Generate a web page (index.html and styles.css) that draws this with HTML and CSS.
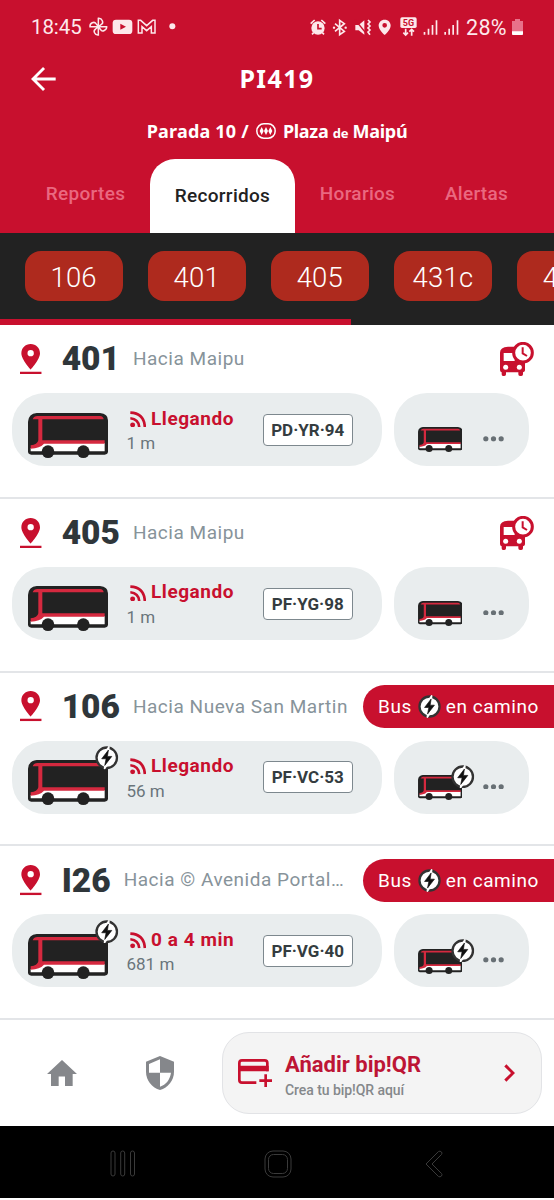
FILE: index.html
```
<!DOCTYPE html>
<html lang="es">
<head>
<meta charset="utf-8">
<title>PI419</title>
<link rel="stylesheet" href="styles.css">
</head>
<body>
<svg class="defs" aria-hidden="true">
  <symbol id="pin" viewBox="0 0 65 91">
    <path fill-rule="evenodd" d="M32 0C16 0 4 12 4 28C4 47 32 77 32 77S60 47 60 28C60 12 48 0 32 0ZM32 18A9.500 9.500 0 1 1 32 37A9.500 9.500 0 1 1 32 18ZM0 83H65V91H0Z" fill="#c8102e"/>
  </symbol>
  <symbol id="bus" viewBox="0 0 240 135">
    <path d="M26 0H216Q240 2 240 22V115Q240 125 230 125H10Q0 125 0 115V26Q2 2 26 0Z" fill="#222"/>
    <path d="M8 105Q32 104 44 90H230V115H8Z" fill="#fff"/>
    <path d="M14 19Q18 9 28 9H216Q226 10 227 19H43V82H230V92H48Q36 106 8 107V97Q28 96 31 82V19Z" fill="#d5293f"/>
    <circle cx="60" cy="116" r="19" fill="#222"/><circle cx="166" cy="116" r="19" fill="#222"/>
  </symbol>
  <symbol id="bolt" viewBox="0 0 70 70">
    <circle cx="35" cy="35" r="30.500" fill="#fff" stroke="#333" stroke-width="7"/>
    <path d="M42 1L17 40H31L28 69L54 29H39Z" fill="#fff" stroke="#fff" stroke-width="4"/>
    <path d="M40 12L20 38H33L29 58L50 31H37Z" fill="#111" stroke="#111" stroke-width="2"/>
  </symbol>
  <symbol id="rss" viewBox="0 0 50 50">
    <circle cx="8" cy="42" r="7.500" fill="#c8102e"/>
    <path d="M1 22Q26 24 28 49M1 5Q43 7 45 49" fill="none" stroke="#c8102e" stroke-width="8"/>
  </symbol>
  <symbol id="schedule" viewBox="0 0 102 102">
    <path d="M0 32Q0 15 24 14H58L75 45V85Q75 90 69 91V97Q69 102 64 102H60Q55 102 55 97V91H18V97Q18 102 13 102H9Q5 102 5 97V91Q0 90 0 84Z" fill="#c8102e"/>
    <path d="M11 33H44V57H11Z" fill="#fff"/>
    <circle cx="17" cy="76" r="7.500" fill="#fff"/><circle cx="58" cy="76" r="7.500" fill="#fff"/>
    <circle cx="69" cy="32" r="28" fill="#fff" stroke="#c8102e" stroke-width="9"/>
    <path d="M68 16V34L81 42" fill="none" stroke="#c8102e" stroke-width="6"/>
  </symbol>
  <symbol id="dots" viewBox="0 0 63 17">
    <circle cx="8.500" cy="8.500" r="7.800"/><circle cx="31.500" cy="8.500" r="7.800"/><circle cx="54.500" cy="8.500" r="7.800"/>
  </symbol>
</svg>

<header class="header">
  <div class="status">
    <span class="clock">18:45</span>
    <svg class="notifs" viewBox="0 0 270 66">
      <g fill="none" stroke="#fde8eb" stroke-width="4.500">
        <path d="M31 32V7C43 6 48 21 40 25L31 32H56C57 43 42 49 38 41L31 32V57C20 58 14 44 23 39L31 32H6C5 21 19 15 24 23Z"/>
        <path d="M151 51V13H158L176 29L194 13H201V51H190V32L176 44L162 32V51Z"/>
      </g>
      <rect x="74" y="11" width="59" height="43" rx="10" fill="#fde8eb"/>
      <path d="M97 23L114 32L97 41Z" fill="#c8102e"/>
      <circle cx="253" cy="31" r="9" fill="#fde8eb"/>
    </svg>
    <svg class="system" viewBox="0 0 450 62">
      <g fill="#fde8eb">
        <circle cx="24" cy="33" r="20"/>
        <path d="M2 20L14 9M34 9L46 20M11 47L6 52M37 47L42 52" stroke="#fde8eb" stroke-width="5"/>
        <path d="M136 24H146L163 10V53L146 40H136Z"/>
        <path fill-rule="evenodd" d="M224 8C213 8 206 16 206 26C206 38 224 54 224 54S242 38 242 26C242 16 235 8 224 8ZM224 18A7 7 0 1 1 224 32A7 7 0 1 1 224 18Z"/>
        <rect x="271" y="1" width="49" height="32" rx="5"/>
        <path d="M341 45h5v8h-5zM353 35h5v18h-5zM365 24h5v29h-5zM377 10h5v43h-5zM403 45h5v8h-5zM415 35h5v18h-5zM427 24h5v29h-5zM440 10h5v43h-5z"/>
      </g>
      <path d="M24 21V35H35" fill="none" stroke="#c8102e" stroke-width="5"/>
      <g fill="none" stroke="#fde8eb" stroke-width="5">
        <path d="M75 20L103 43L89 53V10L103 20L75 43"/>
        <path d="M174 9L180 15L174 21L180 27L174 33L180 39L174 45L180 53"/>
        <path d="M287 35V53M280 47L287 54L294 47M305 56V38M298 44L305 37L312 44"/>
      </g>
      <path d="M135 8L170 51" stroke="#c8102e" stroke-width="4"/>
      <g fill="#fde8eb"><circle cx="72" cy="32" r="3.500"/><circle cx="107" cy="32" r="3.500"/></g>
      <text class="net" x="295.500" y="27" text-anchor="middle">5G</text>
    </svg>
    <span class="percent">28%</span>
    <svg class="battery" viewBox="0 0 33 48">
      <path d="M9 0H24V6H33V48H0V6H9Z" fill="#e8718a"/><path d="M0 37H33V44Q33 48 29 48H4Q0 48 0 44Z" fill="#fff"/>
    </svg>
  </div>
  <div class="titlebar">
    <svg class="back" viewBox="0 0 74 72"><path d="M74 36H6M39 3L6 36L39 69" fill="none" stroke="#fff" stroke-width="8.500"/></svg>
    <h1 class="title">PI419</h1>
  </div>
  <p class="stop">
    <span class="stop-code">Parada 10 /</span>
    <svg class="metro" viewBox="0 0 60 48">
      <rect x="2.500" y="2.500" width="55" height="43" rx="21" fill="none" stroke="#fff" stroke-width="4.500"/>
      <path d="M17 12L23 24L17 36L11 24ZM30 12L36 24L30 36L24 24ZM43 12L49 24L43 36L37 24Z" fill="#fff"/>
    </svg>
    <span class="stop-name">Plaza <small class="de">de</small> Maipú</span>
  </p>
  <nav class="tabs">
    <span class="tab">Reportes</span>
    <span class="tab active">Recorridos</span>
    <span class="tab hours">Horarios</span>
    <span class="tab alerts">Alertas</span>
  </nav>
</header>

<section class="routes">
  <div class="pills">
    <span class="pill">106</span><span class="pill">401</span><span class="pill">405</span><span class="pill">431c</span><span class="pill">435</span>
  </div>
  <div class="scroll"></div>
</section>

<main>
  <article class="row">
    <div class="head">
      <svg class="pin"><use href="#pin"/></svg>
      <h2 class="num">401</h2><span class="dest">Hacia Maipu</span>
      <svg class="schedule"><use href="#schedule"/></svg>
    </div>
    <div class="cards">
      <div class="card">
        <div class="bus"><svg class="bus-art"><use href="#bus"/></svg></div>
        <div class="eta"><div class="when"><svg class="rss"><use href="#rss"/></svg>Llegando</div><div class="dist">1 m</div></div>
        <div class="plate">PD·YR·94</div>
      </div>
      <div class="card next">
        <div class="mini"><svg class="bus-art"><use href="#bus"/></svg></div>
        <svg class="dots"><use href="#dots"/></svg>
      </div>
    </div>
  </article>
  <article class="row">
    <div class="head">
      <svg class="pin"><use href="#pin"/></svg>
      <h2 class="num">405</h2><span class="dest">Hacia Maipu</span>
      <svg class="schedule"><use href="#schedule"/></svg>
    </div>
    <div class="cards">
      <div class="card">
        <div class="bus"><svg class="bus-art"><use href="#bus"/></svg></div>
        <div class="eta"><div class="when"><svg class="rss"><use href="#rss"/></svg>Llegando</div><div class="dist">1 m</div></div>
        <div class="plate">PF·YG·98</div>
      </div>
      <div class="card next">
        <div class="mini"><svg class="bus-art"><use href="#bus"/></svg></div>
        <svg class="dots"><use href="#dots"/></svg>
      </div>
    </div>
  </article>
  <article class="row">
    <div class="head">
      <svg class="pin"><use href="#pin"/></svg>
      <h2 class="num">106</h2><span class="dest">Hacia Nueva San Martin</span>
      <div class="coming">Bus<svg class="bolt"><use href="#bolt"/></svg>en camino</div>
    </div>
    <div class="cards">
      <div class="card">
        <div class="bus"><svg class="bus-art"><use href="#bus"/></svg><svg class="badge"><use href="#bolt"/></svg></div>
        <div class="eta"><div class="when"><svg class="rss"><use href="#rss"/></svg>Llegando</div><div class="dist">56 m</div></div>
        <div class="plate">PF·VC·53</div>
      </div>
      <div class="card next">
        <div class="mini"><svg class="bus-art"><use href="#bus"/></svg><svg class="badge"><use href="#bolt"/></svg></div>
        <svg class="dots"><use href="#dots"/></svg>
      </div>
    </div>
  </article>
  <article class="row">
    <div class="head">
      <svg class="pin"><use href="#pin"/></svg>
      <h2 class="num">I26</h2><span class="dest">Hacia © Avenida Portal…</span>
      <div class="coming">Bus<svg class="bolt"><use href="#bolt"/></svg>en camino</div>
    </div>
    <div class="cards">
      <div class="card">
        <div class="bus"><svg class="bus-art"><use href="#bus"/></svg><svg class="badge"><use href="#bolt"/></svg></div>
        <div class="eta"><div class="when"><svg class="rss"><use href="#rss"/></svg>0 a 4 min</div><div class="dist">681 m</div></div>
        <div class="plate">PF·VG·40</div>
      </div>
      <div class="card next">
        <div class="mini"><svg class="bus-art"><use href="#bus"/></svg><svg class="badge"><use href="#bolt"/></svg></div>
        <svg class="dots"><use href="#dots"/></svg>
      </div>
    </div>
  </article>
</main>

<footer class="bottom">
  <svg class="home" viewBox="0 0 90 79"><path d="M45 0L90 42H77V79H54V49H35V79H12V42H0Z" fill="#85878b"/></svg>
  <svg class="shield" viewBox="0 0 84 102">
    <path d="M42 0L84 17V47C84 73 66 95 42 102C18 95 0 73 0 47V17Z" fill="#85878b"/>
    <path d="M42 10V50H9V24ZM42 50H75C72 71 60 86 42 92Z" fill="#fff"/>
  </svg>
  <div class="qr">
    <svg class="cardplus" viewBox="0 0 102 84">
      <path d="M55 71H12Q4 71 4 63V12Q4 4 12 4H80Q88 4 88 12V37" fill="none" stroke="#c8102e" stroke-width="8"/>
      <path d="M4 20H92V37H4ZM79 46H87V61H102V69H87V84H79V69H64V61H79Z" fill="#c8102e"/>
    </svg>
    <div class="qr-text"><strong class="qr-title">Añadir bip!QR</strong><span class="qr-sub">Crea tu bip!QR aquí</span></div>
    <svg class="chevron" viewBox="0 0 33 54"><path d="M4 4L27 27L4 50" fill="none" stroke="#c8102e" stroke-width="9"/></svg>
  </div>
</footer>
<div class="sysnav">
  <svg class="recents" viewBox="0 0 26 28"><g fill="none" stroke="#3a3a3a"><rect x="1" y="1" width="4" height="25" rx="2"/><rect x="10.700" y="1" width="4" height="25" rx="2"/><rect x="20.500" y="1" width="4" height="25" rx="2"/></g></svg>
  <svg class="homekey" viewBox="0 0 28 28"><g fill="none" stroke="#3a3a3a"><rect x="1" y="1" width="26" height="26" rx="8"/><rect x="4.500" y="4.500" width="19" height="19" rx="5"/></g></svg>
  <svg class="backkey" viewBox="0 0 18 28"><path d="M13.500 1.500L1 14L13.500 26.500Q15 27.500 16.500 26Q17.500 24.500 16.500 23.500L7 14L16.500 4.500Q17.500 3 16.500 2Q15 .5 13.500 1.500Z" fill="none" stroke="#3a3a3a"/></svg>
</div>
</body>
</html>
```
FILE: styles.css
```
* { box-sizing: border-box; }
body { margin: 0; width: 554px; height: 1200px; overflow: hidden; background: #fff; font-family: Roboto, "Liberation Sans", sans-serif; display: flex; flex-direction: column; }
svg { display: block; flex: none; }
h1, h2, p { margin: 0; }
span, div { white-space: nowrap; }
.defs { position: absolute; width: 0; height: 0; }

.header { height: 233px; background: #c8102e; color: #fff; flex: none; }
.status { height: 54px; padding-left: 31px; display: flex; align-items: center; color: #fde8eb; }
.clock { width: 57px; font-size: 20.500px; letter-spacing: -.1px; }
.notifs { width: 90px; height: 22px; }
.system { width: 150px; height: 20.700px; margin-left: 132px; }
.net { font: 700 27px Roboto, sans-serif; fill: #c8102e; }
.percent { margin-left: 6px; width: 46px; font-size: 21.500px; letter-spacing: .3px; }
.battery { width: 11px; height: 16px; }
.titlebar { height: 51px; position: relative; display: flex; align-items: center; justify-content: center; }
.back { position: absolute; left: 31px; top: 13px; width: 24.700px; height: 24px; }
.title { font: 700 25px "Noto Sans", sans-serif; letter-spacing: 1.400px; padding-bottom: 4px; }
.stop { height: 52px; display: flex; align-items: center; justify-content: center; gap: 7px; font: 700 18px "Noto Sans", sans-serif; }
.stop-code { letter-spacing: .2px; }
.stop-name { letter-spacing: -.3px; }
.metro { width: 20px; height: 16px; }
.de { font-size: 13px; }
.tabs { margin-top: 2px; height: 74px; display: flex; padding-left: 21px; }
.tab { width: 129px; display: flex; align-items: center; justify-content: center; padding-bottom: 5px; font-size: 19px; font-weight: 500; letter-spacing: .3px; color: #ea6880; }
.tab.active { width: 145px; background: #fff; color: #222; border-radius: 25px 25px 0 0; padding-bottom: 2px; }
.tab.hours { width: 125px; }
.tab.alerts { width: 113px; }

.routes { height: 92px; background: #222; flex: none; overflow: hidden; }
.pills { height: 86px; display: flex; align-items: center; gap: 24.800px; padding-left: 24.500px; }
.pill { flex: none; width: 98.300px; height: 49.500px; border-radius: 16px; background: #ae2a1e; color: #fff; font-size: 27.500px; font-weight: 300; letter-spacing: .2px; display: flex; align-items: center; justify-content: center; padding-top: 2px; }
.scroll { width: 351px; height: 6px; background: #c8102e; }

.row { height: 173.800px; border-bottom: 2px solid #e3e5e8; }
.head { height: 68px; display: flex; align-items: center; padding-left: 20px; }
.pin { width: 21.700px; height: 30.300px; margin-right: 20px; }
.num { font-size: 33.500px; font-weight: 900; color: #2f363a; margin-right: 13px; line-height: 1; }
.dest { font-size: 19px; letter-spacing: .52px; color: #87939a; padding-bottom: 1px; }
.schedule { width: 34px; height: 34px; margin: 0 20px 0 auto; }
.coming { margin-left: auto; width: 191px; height: 43px; border-radius: 22px 0 0 22px; background: #c8102e; color: #fff; display: flex; align-items: center; padding-left: 15px; font-size: 19px; letter-spacing: .55px; }
.bolt { width: 23px; height: 23px; margin: 0 5px 0 6px; }
.cards { display: flex; gap: 12.500px; padding-left: 12px; }
.card { width: 369.500px; height: 73px; border-radius: 33px; background: #e9edee; display: flex; padding-left: 15.500px; }
.card.next { width: 135px; padding-left: 23.500px; }
.bus { position: relative; width: 80px; height: 45px; margin-top: 19.500px; }
.mini { position: relative; width: 44.500px; height: 25px; margin-top: 34.300px; }
.bus-art { width: 100%; height: 100%; }
.badge { position: absolute; width: 23.500px; height: 23.500px; left: 67.500px; top: -14px; }
.mini .badge { left: 33.500px; top: -10px; }
.eta { margin-left: 19px; width: 136.500px; padding-top: 13.500px; }
.when { display: flex; align-items: center; padding-left: 3px; height: 23px; color: #c8102e; font-size: 19px; font-weight: 700; letter-spacing: .55px; }
.rss { width: 16.500px; height: 16.500px; margin: 2px 5px 0 0; }
.dist { font-size: 17px; line-height: 20px; margin-top: 3.500px; color: #69757b; }
.plate { width: 89.500px; height: 32px; margin-top: 20.800px; border: 1.500px solid #7d888e; border-radius: 4px; background: #fff; display: flex; align-items: center; justify-content: center; font-size: 17px; font-weight: 700; color: #343c40; }
.dots { width: 21px; height: 5.700px; margin: 43px 0 0 21px; fill: #687075; }

.bottom { height: 106px; display: flex; align-items: center; padding-left: 46.500px; flex: none; }
.home { width: 30px; height: 26.500px; }
.shield { width: 28px; height: 34px; margin-left: 69.500px; }
.qr { width: 320px; height: 81.500px; margin-left: 47.500px; border: 1.500px solid #e2e3e6; border-radius: 27px; background: #f4f4f4; display: flex; align-items: center; padding-left: 15.500px; }
.cardplus { width: 34px; height: 28px; }
.qr-text { width: 232px; padding-left: 13px; display: flex; flex-direction: column; padding-top: 6px; }
.qr-title { font-size: 22px; line-height: 26px; color: #bd1535; }
.qr-sub { font-size: 14px; line-height: 20px; margin-top: 2px; font-weight: 500; color: #85888b; letter-spacing: -.06px; }
.chevron { width: 11px; height: 18px; }
.sysnav { height: 72px; background: #000; flex: none; display: flex; align-items: center; padding: 3px 0 0 110px; }
.recents { width: 26px; height: 28px; }
.homekey { width: 28px; height: 28px; margin-left: 128px; }
.backkey { width: 18px; height: 28px; margin-left: 133px; }
```
